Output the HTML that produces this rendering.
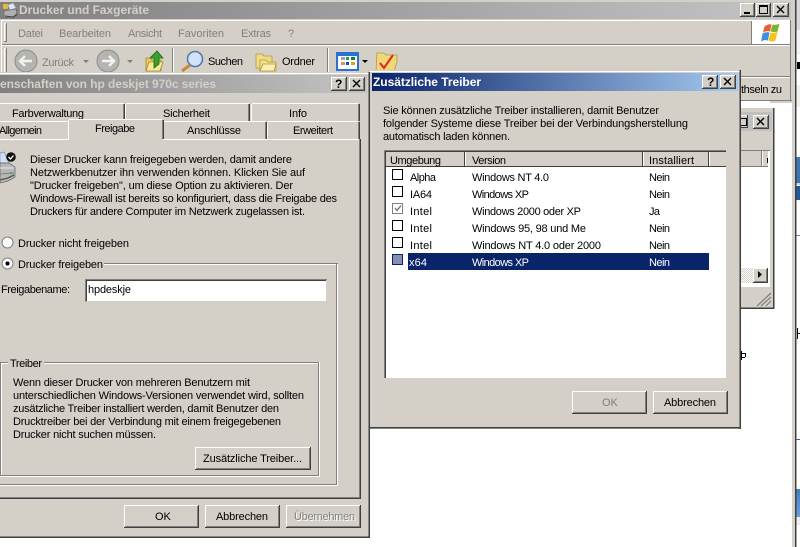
<!DOCTYPE html>
<html><head><meta charset="utf-8">
<style>
html,body{margin:0;padding:0;background:#fff;width:800px;height:547px;overflow:hidden}
svg{display:block}
text{font-family:"Liberation Sans",sans-serif;font-size:11px;fill:#000;white-space:pre}
.g{fill:#808080}
.d{fill:#808080}
.b{font-weight:bold;font-size:12px}
</style></head><body>
<svg width="800" height="547" viewBox="0 0 800 547" xmlns="http://www.w3.org/2000/svg" shape-rendering="crispEdges">
<defs>
<linearGradient id="gg" x1="0" x2="1" y1="0" y2="0"><stop offset="0" stop-color="#808080"/><stop offset="1" stop-color="#c4c4c4"/></linearGradient>
<linearGradient id="gd" x1="0" x2="1" y1="0" y2="0"><stop offset="0" stop-color="#0a246a"/><stop offset="1" stop-color="#a6caf0"/></linearGradient>
<linearGradient id="bb" x1="0" x2="0" y1="0" y2="1"><stop offset="0" stop-color="#3f7fc0"/><stop offset="1" stop-color="#6aa0dc"/></linearGradient>
<pattern id="ck" width="2" height="2" patternUnits="userSpaceOnUse"><rect width="2" height="2" fill="#fff"/><rect width="1" height="1" fill="#d4d0c8"/><rect x="1" y="1" width="1" height="1" fill="#d4d0c8"/></pattern>
</defs>

<!-- right side background -->
<rect width="800" height="547" fill="#fff"/>
<rect x="796" y="0" width="4" height="30" fill="#d8d8d8"/>
<rect x="796" y="30" width="4" height="25" fill="#f2f2f2"/>
<rect x="796" y="85" width="4" height="22" fill="#f0f0f0"/>
<rect x="797" y="62" width="3" height="7" fill="#000"/>
<rect x="796" y="157" width="4" height="26" fill="#3f75b0"/>
<rect x="796" y="183" width="4" height="2" fill="#c8d0e8"/>
<rect x="796" y="186" width="4" height="14" fill="#1f5a9c"/>
<rect x="796" y="235" width="4" height="1" fill="#8878a8"/>
<rect x="796" y="439" width="4" height="1" fill="#3060b0"/>
<rect x="796" y="489" width="4" height="28" fill="url(#bb)"/>
<rect x="796" y="517" width="4" height="8" fill="#eee"/>
<rect x="797" y="328" width="1" height="11" fill="#000"/><rect x="798" y="333" width="2" height="1" fill="#000"/>
<rect x="792" y="0" width="3" height="547" fill="#d4d0c8"/>
<rect x="795" y="0" width="1.500" height="547" fill="#404040"/>

<!-- main window top -->
<rect x="0" y="0" width="792" height="107" fill="#d4d0c8"/>
<rect x="0" y="2" width="792" height="17" fill="url(#gg)"/>
<rect x="791" y="0" width="1" height="107" fill="#d4d0c8"/>
<rect x="740" y="100" width="52" height="1" fill="#808080"/>
<rect x="740" y="101" width="52" height="6" fill="#fff"/>
<rect x="770" y="101" width="22" height="2" fill="#d4d0c8"/>
<rect x="740" y="103" width="52" height="444" fill="#fff"/>
<!-- bands -->
<rect x="1" y="20" width="790" height="1" fill="#fff"/>
<rect x="1" y="44" width="790" height="1" fill="#808080"/>
<rect x="1" y="45" width="790" height="1" fill="#fff"/>
<rect x="1" y="20" width="1" height="80" fill="#fff"/>
<rect x="790" y="20" width="1" height="81" fill="#808080"/>
<rect x="740" y="76" width="50" height="1" fill="#808080"/>
<rect x="740" y="77" width="50" height="1" fill="#fff"/>
<!-- grippers -->
<rect x="4" y="23" width="1" height="19" fill="#fff"/><rect x="4" y="23" width="3" height="1" fill="#fff"/><rect x="6" y="23" width="1" height="19" fill="#808080"/><rect x="4" y="41" width="3" height="1" fill="#808080"/>
<rect x="4" y="48" width="1" height="24" fill="#fff"/><rect x="4" y="48" width="3" height="1" fill="#fff"/><rect x="6" y="48" width="1" height="24" fill="#808080"/>
<rect x="172" y="48" width="1" height="24" fill="#808080"/><rect x="173" y="48" width="1" height="24" fill="#fff"/>
<rect x="327" y="48" width="1" height="24" fill="#808080"/><rect x="328" y="48" width="1" height="24" fill="#fff"/>

<!-- title icon -->
<g shape-rendering="auto">
<rect x="3" y="4" width="5" height="5" rx="1" fill="#e8b838"/>
<path d="M8 5l5-2 3 5-6 2z" fill="#dfe8f4" stroke="#8aa0c0" stroke-width=".6"/>
<path d="M4 11l12-2 1 6-4 3-9-1z" fill="#b0b0b0" stroke="#606060" stroke-width=".6"/>
<path d="M5 16l8 1 4-3" fill="none" stroke="#404040" stroke-width="1"/>
</g>
<text x="19" y="14" class="b" style="fill:#d4d0c8" textLength="130">Drucker und Faxgeräte</text>

<!-- title buttons -->
<g id="tb">
<rect x="740" y="3" width="15" height="14" fill="#404040"/><rect x="740" y="3" width="14" height="13" fill="#fff"/><rect x="741" y="4" width="13" height="12" fill="#808080"/><rect x="741" y="4" width="12" height="11" fill="#d4d0c8"/>
<rect x="744" y="12" width="6" height="2" fill="#000"/>
<rect x="756" y="3" width="15" height="14" fill="#404040"/><rect x="756" y="3" width="14" height="13" fill="#fff"/><rect x="757" y="4" width="13" height="12" fill="#808080"/><rect x="757" y="4" width="12" height="11" fill="#d4d0c8"/>
<rect x="759.500" y="5.500" width="8" height="8" fill="none" stroke="#000"/><rect x="759" y="5" width="9" height="2" fill="#000"/>
<rect x="773" y="3" width="16" height="14" fill="#404040"/><rect x="773" y="3" width="15" height="13" fill="#fff"/><rect x="774" y="4" width="14" height="12" fill="#808080"/><rect x="774" y="4" width="13" height="11" fill="#d4d0c8"/>
<path d="M777 6l7 7M784 6l-7 7" stroke="#000" stroke-width="1.400" shape-rendering="auto"/>
</g>

<!-- logo box -->
<rect x="751" y="21" width="39" height="23" fill="#fff"/><rect x="751" y="21" width="1" height="23" fill="#808080"/>
<g shape-rendering="auto" transform="translate(1.500 0.500)">
<path d="M763 26q4-3 7 -2l-1.500 7q-4-1-7 1z" fill="#e8612c"/>
<path d="M771 24q4 1 7 -1l-2 8q-3 1-7 0z" fill="#7ab32e"/>
<path d="M761 33q4-2 7-1l-1.500 8q-4-1-7 1z" fill="#3f8fe0"/>
<path d="M769 32q4 1 7-1l-2 9q-4 2-7 0z" fill="#f4c21a"/>
</g>

<!-- menu -->
<text x="18" y="37" class="g" textLength="25">Datei</text>
<text x="59" y="37" class="g" textLength="52">Bearbeiten</text>
<text x="128" y="37" class="g" textLength="34">Ansicht</text>
<text x="178" y="37" class="g" textLength="46">Favoriten</text>
<text x="241" y="37" class="g" textLength="30">Extras</text>
<text x="288" y="37" class="g" textLength="5">?</text>

<!-- toolbar -->
<g shape-rendering="auto">
<circle cx="26" cy="61" r="11" fill="#b4b4b0" stroke="#8c8c8c"/>
<path d="M32 61H21M25 56l-5 5 5 5" fill="none" stroke="#f2f2f0" stroke-width="2.400"/>
<circle cx="108" cy="61" r="11" fill="#b4b4b0" stroke="#8c8c8c"/>
<path d="M102 61h11M109 56l5 5-5 5" fill="none" stroke="#f2f2f0" stroke-width="2.400"/>
<path d="M83 60l6 0-3 3z M127 60l6 0-3 3z" fill="#808080"/>
<!-- up folder -->
<path d="M146 58h4l2 2h9v11h-15z" fill="#e8c860" stroke="#a88828" stroke-width=".8"/>
<path d="M146 71l3-9h14l-3 9z" fill="#f8e898" stroke="#a88828" stroke-width=".8"/>
<path d="M154 68v-10h-4l7-7 6 7h-4v6z" fill="#3aa02a" stroke="#1c6a14" stroke-width=".8"/>
<!-- search -->
<circle cx="195" cy="59" r="7.500" fill="#cfe4fa" stroke="#5a78a8" stroke-width="1.600"/>
<path d="M190 65l-8 6" stroke="#c88838" stroke-width="3"/>
<!-- folders -->
<path d="M256 54h6l2 2h8v12h-16z" fill="#f0dc88" stroke="#b09838" stroke-width=".8"/>
<path d="M260 60h6l2 2h8v9h-16z" fill="#f4e090" stroke="#b09838" stroke-width=".8"/>
<path d="M260 71l3-7h13l-2 7z" fill="#fbeeb0" stroke="#b09838" stroke-width=".8"/>
</g>
<text x="208" y="65" textLength="35">Suchen</text>
<text x="282" y="65" textLength="33">Ordner</text>
<!-- views icon -->
<rect x="336" y="52" width="23" height="19" fill="#2a72d0"/>
<rect x="338" y="56" width="19" height="13" fill="#fff"/>
<rect x="341" y="57" width="4" height="3" fill="#9a9ae0"/><rect x="346" y="57" width="3" height="3" fill="#20a060"/><rect x="351" y="57" width="4" height="3" fill="#108040"/>
<rect x="341" y="62" width="4" height="3" fill="#f08860"/><rect x="346" y="62" width="3" height="3" fill="#1050b0"/><rect x="351" y="62" width="4" height="3" fill="#e0a020"/>
<path d="M362 60h6l-3 3z" fill="#000" shape-rendering="auto"/>
<g shape-rendering="auto">
<path d="M377 53h7l2 2h11v7l-3 9h-18z" fill="#f0d878" stroke="#b09838" stroke-width=".8"/>
<path d="M380 63l4 5 9-13" fill="none" stroke="#e02818" stroke-width="2"/>
</g>
<text x="42" y="66" class="g" textLength="32">Zurück</text>

<!-- thseln zu -->
<text x="741" y="93" textLength="41">thseln zu</text>

<!-- third window -->
<rect x="700" y="108" width="74" height="201" fill="#d4d0c8"/>
<rect x="773" y="108" width="1.500" height="201" fill="#404040"/>
<rect x="700" y="307.500" width="74" height="1.500" fill="#404040"/>
<rect x="700" y="112" width="72" height="19" fill="#c0c0c0"/>
<rect x="733" y="115" width="15" height="13" fill="#404040"/><rect x="733" y="115" width="14" height="12" fill="#fff"/><rect x="734" y="116" width="13" height="11" fill="#d4d0c8"/>
<rect x="738.500" y="118.500" width="8" height="7" fill="none" stroke="#000"/>
<rect x="753" y="115" width="16" height="14" fill="#404040"/><rect x="753" y="115" width="15" height="13" fill="#fff"/><rect x="754" y="116" width="14" height="12" fill="#808080"/><rect x="754" y="116" width="13" height="11" fill="#d4d0c8"/>
<path d="M757 118l7 7M764 118l-7 7" stroke="#000" stroke-width="1.400" shape-rendering="auto"/>
<rect x="700" y="150" width="70" height="136" fill="#fff"/>
<rect x="700" y="150" width="70" height="1" fill="#808080"/>
<rect x="700" y="151" width="68" height="16" fill="#d4d0c8"/>
<rect x="700" y="166" width="68" height="1" fill="#808080"/>
<rect x="761" y="151" width="1" height="15" fill="#808080"/><rect x="762" y="151" width="1" height="15" fill="#fff"/>
<rect x="767" y="158" width="1" height="5" fill="#000"/>
<rect x="700" y="268" width="53" height="15" fill="url(#ck)"/>
<rect x="753" y="268" width="15" height="15" fill="#404040"/><rect x="753" y="268" width="14" height="14" fill="#fff"/><rect x="754" y="269" width="13" height="13" fill="#808080"/><rect x="754" y="269" width="12" height="12" fill="#d4d0c8"/>
<path d="M758 271v7l4-3.500z" fill="#000" shape-rendering="auto"/>
<rect x="700" y="286" width="70" height="1" fill="#fff"/>
<path d="M771 293l-14 13M771 297l-10 9M771 301l-5 5" stroke="#808080" stroke-width="1.200" shape-rendering="auto"/>
<rect x="741" y="351" width="1" height="9" fill="#000"/><rect x="742" y="353" width="3" height="1" fill="#000"/><rect x="745" y="353" width="1" height="4" fill="#000"/><rect x="742" y="357" width="3" height="1" fill="#000"/>

<!-- properties dialog -->
<rect x="0" y="72" width="370" height="466" fill="#d4d0c8"/>
<rect x="0" y="73" width="369" height="1" fill="#fff"/>
<rect x="368.500" y="72" width="1.500" height="466" fill="#404040"/>
<rect x="0" y="536.500" width="370" height="1.500" fill="#404040"/>
<rect x="0" y="75" width="367" height="18" fill="url(#gg)"/>
<text x="0" y="88" class="b" style="fill:#d4d0c8" textLength="216">enschaften von hp deskjet 970c series</text>
<rect x="331" y="77" width="16" height="14" fill="#404040"/><rect x="331" y="77" width="15" height="13" fill="#fff"/><rect x="332" y="78" width="14" height="12" fill="#808080"/><rect x="332" y="78" width="13" height="11" fill="#d4d0c8"/>
<text x="335" y="88" style="font-weight:bold;font-size:12px">?</text>
<rect x="349" y="77" width="16" height="14" fill="#404040"/><rect x="349" y="77" width="15" height="13" fill="#fff"/><rect x="350" y="78" width="14" height="12" fill="#808080"/><rect x="350" y="78" width="13" height="11" fill="#d4d0c8"/>
<path d="M353 80l7 7M360 80l-7 7" stroke="#000" stroke-width="1.400" shape-rendering="auto"/>

<!-- tabs row 1 -->
<rect x="0" y="103" width="124" height="1" fill="#fff"/><rect x="123" y="104" width="1" height="17" fill="#808080"/><rect x="124" y="104" width="1" height="17" fill="#404040"/>
<rect x="126" y="103" width="123" height="1" fill="#fff"/><rect x="125" y="104" width="1" height="17" fill="#fff"/><rect x="248" y="104" width="1" height="17" fill="#808080"/><rect x="249" y="104" width="1" height="17" fill="#404040"/>
<rect x="252" y="103" width="106" height="1" fill="#fff"/><rect x="251" y="104" width="1" height="17" fill="#fff"/><rect x="358" y="104" width="1" height="17" fill="#808080"/><rect x="359" y="104" width="1" height="17" fill="#404040"/>
<text x="12" y="117" textLength="72">Farbverwaltung</text>
<text x="163" y="117" textLength="47">Sicherheit</text>
<text x="289" y="117" textLength="18">Info</text>
<!-- tabs row 2 -->
<rect x="0" y="121" width="67" height="1" fill="#fff"/>
<rect x="164" y="121" width="102" height="1" fill="#fff"/>
<rect x="162" y="122" width="1" height="17" fill="#808080"/><rect x="163" y="122" width="1" height="17" fill="#404040"/>
<rect x="265" y="122" width="1" height="17" fill="#808080"/><rect x="266" y="122" width="1" height="17" fill="#404040"/>
<rect x="268" y="121" width="90" height="1" fill="#fff"/><rect x="267" y="122" width="1" height="17" fill="#fff"/>
<rect x="358" y="122" width="1" height="17" fill="#808080"/><rect x="359" y="122" width="1" height="17" fill="#404040"/>
<text x="-1" y="134" textLength="43">Allgemein</text>
<text x="187" y="134" textLength="54">Anschlüsse</text>
<text x="293" y="134" textLength="40">Erweitert</text>
<!-- panel -->
<rect x="0" y="139" width="68" height="1" fill="#fff"/>
<rect x="163" y="139" width="196" height="1" fill="#fff"/>
<rect x="359" y="139" width="1" height="359" fill="#808080"/>
<rect x="360" y="139" width="1" height="360" fill="#404040"/>
<rect x="0" y="497" width="360" height="1" fill="#808080"/>
<rect x="0" y="498" width="361" height="1" fill="#404040"/>
<!-- selected tab -->
<rect x="68" y="119" width="95" height="21" fill="#d4d0c8"/>
<rect x="69" y="119" width="93" height="1" fill="#fff"/>
<rect x="68" y="120" width="1" height="20" fill="#fff"/>
<rect x="162" y="120" width="1" height="19" fill="#808080"/><rect x="163" y="120" width="1" height="19" fill="#404040"/>
<text x="95" y="132" textLength="40">Freigabe</text>

<!-- printer icon -->
<g shape-rendering="auto">
<path d="M0 153l4-1 5 11H0z" fill="#cfe0f4" stroke="#7890b0" stroke-width=".7"/>
<path d="M0 163h9l6 4v10l-7 4-8 2z" fill="#b8b8b8" stroke="#606060" stroke-width=".7"/>
<path d="M0 168h14" stroke="#e8e8e8"/>
<path d="M0 174l14-1" stroke="#808080"/>
<path d="M0 180l8-2 6-3" fill="none" stroke="#505050" stroke-width="1.300"/>
<rect x="10" y="172" width="2" height="2" fill="#40b040"/>
<circle cx="11" cy="157" r="4.800" fill="#111"/>
<path d="M8.500 157l2 2 3-3.500" fill="none" stroke="#fff" stroke-width="1.300"/>
</g>
<text x="30" y="163" textLength="262">Dieser Drucker kann freigegeben werden, damit andere</text>
<text x="30" y="176" textLength="275">Netzwerkbenutzer ihn verwenden können. Klicken Sie auf</text>
<text x="30" y="189" textLength="263">"Drucker freigeben", um diese Option zu aktivieren. Der</text>
<text x="30" y="202" textLength="307">Windows-Firewall ist bereits so konfiguriert, dass die Freigabe des</text>
<text x="30" y="215" textLength="275">Druckers für andere Computer im Netzwerk zugelassen ist.</text>

<g shape-rendering="auto">
<circle cx="7.500" cy="242.500" r="5.500" fill="#fff" stroke="#808080"/>
<circle cx="7.500" cy="263.500" r="5.500" fill="#fff" stroke="#808080"/>
<circle cx="7.500" cy="263.500" r="2" fill="#000"/>
</g>
<text x="18" y="247" textLength="111">Drucker nicht freigeben</text>

<!-- share group -->
<rect x="104" y="263" width="234" height="1" fill="#808080"/><rect x="104" y="264" width="233" height="1" fill="#fff"/>
<rect x="336" y="264" width="1" height="220" fill="#808080"/><rect x="337" y="264" width="1" height="221" fill="#fff"/>
<rect x="0" y="484" width="337" height="1" fill="#808080"/><rect x="0" y="485" width="338" height="1" fill="#fff"/>
<text x="18" y="268" textLength="85">Drucker freigeben</text>
<text x="1" y="293" textLength="69">Freigabename:</text>
<rect x="85" y="279" width="242" height="23" fill="#fff"/>
<rect x="85" y="279" width="242" height="1" fill="#808080"/><rect x="85" y="279" width="1" height="23" fill="#808080"/>
<rect x="86" y="280" width="240" height="1" fill="#404040"/><rect x="86" y="280" width="1" height="21" fill="#404040"/>
<rect x="86" y="301" width="241" height="1" fill="#d4d0c8"/><rect x="326" y="280" width="1" height="22" fill="#d4d0c8"/>
<text x="88" y="293" textLength="43">hpdeskje</text>

<!-- driver group -->
<rect x="44" y="362" width="275" height="1" fill="#808080"/><rect x="44" y="363" width="274" height="1" fill="#fff"/>
<rect x="0" y="362" width="8" height="1" fill="#808080"/><rect x="1" y="363" width="7" height="1" fill="#fff"/>
<rect x="0" y="362" width="1" height="114" fill="#808080"/><rect x="1" y="363" width="1" height="112" fill="#fff"/>
<rect x="318" y="363" width="1" height="113" fill="#808080"/><rect x="319" y="362" width="1" height="115" fill="#fff"/>
<rect x="0" y="475" width="319" height="1" fill="#808080"/><rect x="0" y="476" width="320" height="1" fill="#fff"/>
<text x="10" y="367" textLength="32">Treiber</text>
<text x="13" y="386" textLength="237">Wenn dieser Drucker von mehreren Benutzern mit</text>
<text x="13" y="399" textLength="291">unterschiedlichen Windows-Versionen verwendet wird, sollten</text>
<text x="13" y="412" textLength="266">zusätzliche Treiber installiert werden, damit Benutzer den</text>
<text x="13" y="425" textLength="268">Drucktreiber bei der Verbindung mit einem freigegebenen</text>
<text x="13" y="438" textLength="143">Drucker nicht suchen müssen.</text>

<!-- Zusatz button -->
<rect x="195" y="447" width="116" height="23" fill="#404040"/><rect x="195" y="447" width="115" height="22" fill="#fff"/><rect x="196" y="448" width="114" height="21" fill="#808080"/><rect x="196" y="448" width="113" height="20" fill="#d4d0c8"/>
<text x="203" y="462" textLength="99">Zusätzliche Treiber...</text>

<!-- dialog buttons -->
<rect x="124" y="505" width="75" height="23" fill="#404040"/><rect x="124" y="505" width="74" height="22" fill="#fff"/><rect x="125" y="506" width="73" height="21" fill="#808080"/><rect x="125" y="506" width="72" height="20" fill="#d4d0c8"/>
<text x="155" y="520">OK</text>
<rect x="205" y="505" width="75" height="23" fill="#404040"/><rect x="205" y="505" width="74" height="22" fill="#fff"/><rect x="206" y="506" width="73" height="21" fill="#808080"/><rect x="206" y="506" width="72" height="20" fill="#d4d0c8"/>
<text x="216" y="520" textLength="52">Abbrechen</text>
<rect x="286" y="505" width="75" height="23" fill="#404040"/><rect x="286" y="505" width="74" height="22" fill="#fff"/><rect x="287" y="506" width="73" height="21" fill="#808080"/><rect x="287" y="506" width="72" height="20" fill="#d4d0c8"/>
<text x="295" y="521" style="fill:#fff" textLength="61">Übernehmen</text>
<text x="294" y="520" class="g" textLength="61">Übernehmen</text>

<!-- driver dialog -->
<rect x="370" y="70" width="371" height="359" fill="#d4d0c8"/>
<rect x="370" y="71" width="370" height="1" fill="#fff"/>
<rect x="739.500" y="70" width="1.500" height="359" fill="#404040"/>
<rect x="370" y="427" width="371" height="1.500" fill="#404040"/>
<rect x="372" y="73" width="366" height="18" fill="url(#gd)"/>
<text x="373" y="86" class="b" style="fill:#fff" textLength="108">Zusätzliche Treiber</text>
<rect x="702" y="75" width="16" height="14" fill="#404040"/><rect x="702" y="75" width="15" height="13" fill="#fff"/><rect x="703" y="76" width="14" height="12" fill="#808080"/><rect x="703" y="76" width="13" height="11" fill="#d4d0c8"/>
<text x="707" y="86" style="font-weight:bold;font-size:12px">?</text>
<rect x="720" y="75" width="16" height="14" fill="#404040"/><rect x="720" y="75" width="15" height="13" fill="#fff"/><rect x="721" y="76" width="14" height="12" fill="#808080"/><rect x="721" y="76" width="13" height="11" fill="#d4d0c8"/>
<path d="M724 78l7 7M731 78l-7 7" stroke="#000" stroke-width="1.400" shape-rendering="auto"/>

<text x="383" y="114" textLength="276">Sie können zusätzliche Treiber installieren, damit Benutzer</text>
<text x="383" y="127" textLength="305">folgender Systeme diese Treiber bei der Verbindungsherstellung</text>
<text x="383" y="140" textLength="127">automatisch laden können.</text>

<!-- list -->
<rect x="384" y="150" width="343" height="229" fill="#fff"/>
<rect x="384" y="150" width="343" height="1" fill="#808080"/><rect x="384" y="150" width="1" height="229" fill="#808080"/>
<rect x="385" y="151" width="342" height="1" fill="#404040"/><rect x="385" y="151" width="1" height="228" fill="#404040"/>
<rect x="726" y="150" width="1" height="229" fill="#d4d0c8"/><rect x="384" y="378" width="343" height="1" fill="#d4d0c8"/>
<rect x="386" y="152" width="340" height="15" fill="#d4d0c8"/>
<rect x="386" y="166" width="340" height="1" fill="#404040"/>
<rect x="464" y="152" width="1" height="14" fill="#404040"/><rect x="465" y="152" width="1" height="14" fill="#fff"/>
<rect x="642" y="152" width="1" height="14" fill="#404040"/><rect x="643" y="152" width="1" height="14" fill="#fff"/>
<rect x="708" y="152" width="1" height="14" fill="#404040"/><rect x="709" y="152" width="1" height="14" fill="#fff"/>
<text x="390" y="164" textLength="51">Umgebung</text>
<text x="472" y="164" textLength="34">Version</text>
<text x="649" y="164" textLength="45">Installiert</text>

<rect x="408" y="253" width="301" height="17" fill="#0a246a"/>

<rect x="392.500" y="169.500" width="10" height="10" fill="#fff" stroke="#000"/>
<rect x="392.500" y="186.500" width="10" height="10" fill="#fff" stroke="#000"/>
<rect x="392.500" y="203.500" width="10" height="10" fill="#fff" stroke="#808080"/>
<path d="M395 208l2 2.500 4-5" fill="none" stroke="#808080" stroke-width="1.500" shape-rendering="auto"/>
<rect x="392.500" y="220.500" width="10" height="10" fill="#fff" stroke="#000"/>
<rect x="392.500" y="237.500" width="10" height="10" fill="#fff" stroke="#000"/>
<rect x="392.500" y="254.500" width="10" height="10" fill="#8590b4" stroke="#0a246a"/>

<text x="410" y="181" textLength="26">Alpha</text><text x="472" y="181" textLength="77">Windows NT 4.0</text><text x="649" y="181" textLength="21">Nein</text>
<text x="410" y="198" textLength="22">IA64</text><text x="472" y="198" textLength="57">Windows XP</text><text x="649" y="198" textLength="21">Nein</text>
<text x="410" y="215" textLength="22">Intel</text><text x="472" y="215" textLength="109">Windows 2000 oder XP</text><text x="649" y="215" textLength="11">Ja</text>
<text x="410" y="232" textLength="22">Intel</text><text x="472" y="232" textLength="114">Windows 95, 98 und Me</text><text x="649" y="232" textLength="21">Nein</text>
<text x="410" y="249" textLength="22">Intel</text><text x="472" y="249" textLength="129">Windows NT 4.0 oder 2000</text><text x="649" y="249" textLength="21">Nein</text>
<text x="409" y="266" style="fill:#fff" textLength="18">x64</text><text x="472" y="266" style="fill:#fff" textLength="57">Windows XP</text><text x="649" y="266" style="fill:#fff" textLength="21">Nein</text>

<!-- dialog btns -->
<rect x="572" y="391" width="75" height="23" fill="#404040"/><rect x="572" y="391" width="74" height="22" fill="#fff"/><rect x="573" y="392" width="73" height="21" fill="#808080"/><rect x="573" y="392" width="72" height="20" fill="#d4d0c8"/>
<text x="602" y="406" class="g">OK</text>
<rect x="653" y="391" width="75" height="23" fill="#404040"/><rect x="653" y="391" width="74" height="22" fill="#fff"/><rect x="654" y="392" width="73" height="21" fill="#808080"/><rect x="654" y="392" width="72" height="20" fill="#d4d0c8"/>
<text x="664" y="406" textLength="52">Abbrechen</text>
</svg>
</body></html>
